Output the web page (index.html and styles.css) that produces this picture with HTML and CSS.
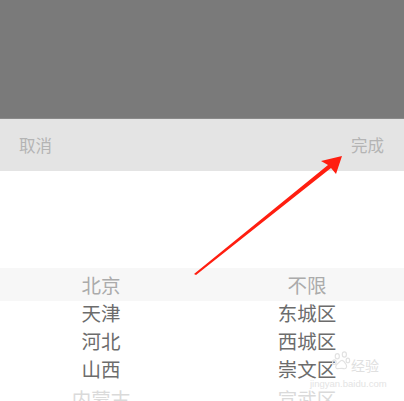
FILE: index.html
```html
<!DOCTYPE html>
<html lang="zh">
<head>
<meta charset="utf-8">
<link rel="stylesheet" href="styles.css">
</head>
<body>
<div class="screen">
  <div class="mask"></div>
  <div class="toolbar">
    <span class="btn">取消</span>
    <span class="btn">完成</span>
  </div>
  <div class="picker">
    <div class="band">
      <div class="col left">北京</div>
      <div class="col right">不限</div>
    </div>
    <div class="rows">
      <div class="col left">天津</div>
      <div class="col right">东城区</div>
      <div class="col left">河北</div>
      <div class="col right">西城区</div>
      <div class="col left">山西</div>
      <div class="col right">崇文区</div>
      <div class="col left faint">内蒙古</div>
      <div class="col right faint">宣武区</div>
    </div>
  </div>
  <svg class="arrow" width="404" height="401" viewBox="0 0 404 401">
    <polygon points="194,274 328,165 321,161 342,156 336,174 331,168 196,275" fill="#ff1e10"/>
  </svg>
  <div class="watermark">
    <svg class="paw" width="20" height="30" viewBox="0 0 34 34">
      <g fill="none" stroke="#e2e2e2" stroke-width="2">
        <ellipse cx="9" cy="9" rx="3.5" ry="4.5"/>
        <ellipse cx="21" cy="6" rx="3.5" ry="4.5"/>
        <ellipse cx="4" cy="19" rx="3" ry="4"/>
        <ellipse cx="27" cy="16" rx="3" ry="4"/>
        <path d="M9 30 C5 30 6 23 10 21 C13 19 14 16 17 16 C20 16 22 20 24 23 C26 27 24 31 20 30 C17 29 13 30 9 30 Z"/>
      </g>
    </svg>
    <span class="wm-text">经验</span>
    <span class="wm-url">jingyan.baidu.com</span>
  </div>
</div>
</body>
</html>
```

FILE: styles.css
```css
* { box-sizing: border-box; }
html, body {
  margin: 0;
  padding: 0;
  width: 404px;
  height: 401px;
  overflow: hidden;
  background: #ffffff;
  font-family: "Noto Sans CJK SC", "Noto Sans", sans-serif;
}
.screen {
  position: relative;
  width: 404px;
  height: 401px;
  overflow: hidden;
}
.mask {
  height: 119px;
  background: #7a7a7a;
  border-bottom: 1px solid #8a8a8a;
}
.toolbar {
  height: 52px;
  background: #e4e4e4;
  display: flex;
  justify-content: space-between;
  align-items: center;
  padding: 0 20px 0 19px;
}
.btn {
  font-size: 16.5px;
  color: #b4b4b4;
  line-height: 1;
}
.picker {
  padding-top: 97px;
}
.band {
  height: 33px;
  background: #f7f7f7;
  display: grid;
  grid-template-columns: 202px 1fr;
  align-items: center;
}
.band .col {
  color: #ababab;
}
.rows {
  margin-top: -2px;
  display: grid;
  grid-template-columns: 202px 1fr;
  grid-auto-rows: 28px;
  align-items: center;
}
.col {
  font-size: 19.5px;
  line-height: 28px;
  text-align: center;
  color: #6c6c6c;
}
.col.right {
  padding-left: 8px;
}
.col.faint {
  color: #dadada;
  margin-top: 3px;
}
.arrow {
  position: absolute;
  left: 0;
  top: 0;
}
.watermark {
  position: absolute;
  left: 308px;
  top: 340px;
  width: 90px;
  height: 50px;
}
.paw {
  position: absolute;
  left: 24px;
  top: 6px;
}
.wm-text {
  position: absolute;
  left: 43px;
  top: 18px;
  font-size: 14px;
  color: #e0e0e0;
  line-height: 1;
}
.wm-url {
  position: absolute;
  left: 2px;
  top: 39px;
  font-family: "Liberation Sans", sans-serif;
  font-size: 9.5px;
  color: #e4e4e4;
  line-height: 1;
}
```
